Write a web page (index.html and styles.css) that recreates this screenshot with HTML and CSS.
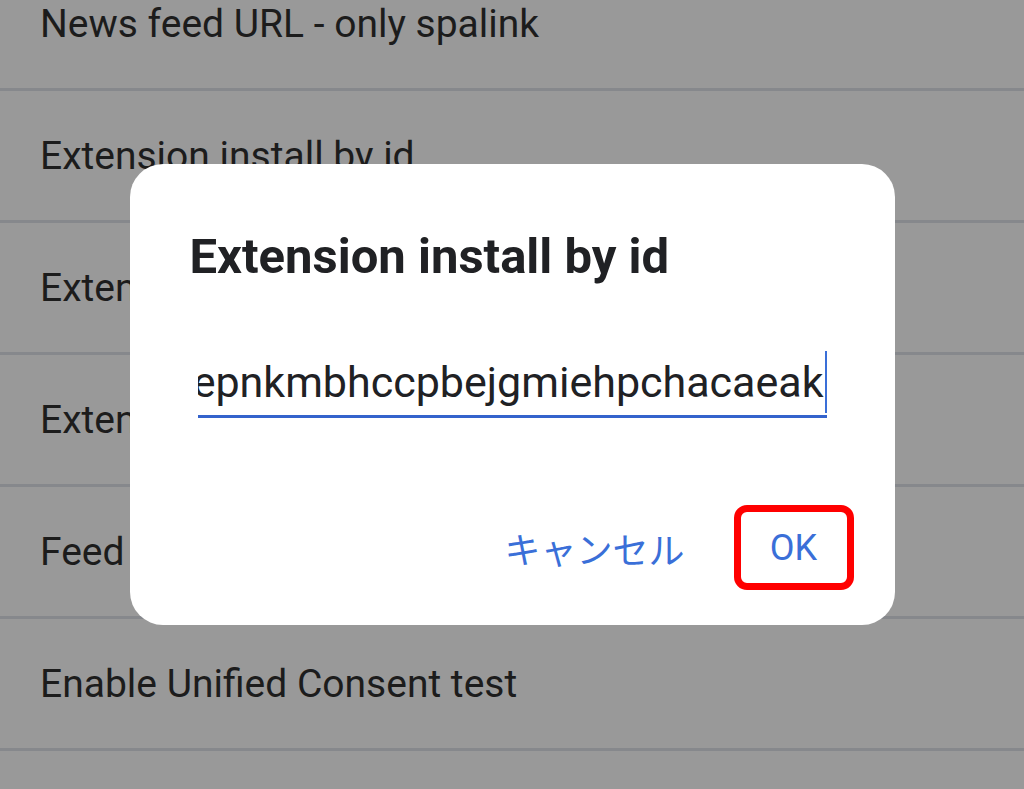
FILE: index.html
```html
<!DOCTYPE html>
<html lang="ja">
<head>
<meta charset="utf-8">
<title>Flags</title>
<link rel="stylesheet" href="styles.css">
</head>
<body>
<ul class="list">
  <li class="row">News feed URL - only spalink</li>
  <li class="row">Extension install by id</li>
  <li class="row">Extension install by URL</li>
  <li class="row">Extension install from file</li>
  <li class="row">Feed notifications test</li>
  <li class="row">Enable Unified Consent test</li>
  <li class="row">Reset all settings</li>
</ul>
<div class="scrim">
  <div class="dialog" role="dialog">
    <h1 class="title">Extension install by id</h1>
    <div class="field">
      <div class="field-text"><span>lmjegmlicamnimmfhcmpkclmigmmcbepnkmbhccpbejgmiehpchacaeak</span><span class="cursor"></span></div>
    </div>
    <div class="actions">
      <button class="btn">キャンセル</button>
      <button class="btn btn-ok">OK</button>
    </div>
  </div>
</div>
</body>
</html>
```
FILE: styles.css
```css
html, body {
  margin: 0;
  padding: 0;
  height: 100%;
  overflow: hidden;
}
body {
  background: #999999;
  font-family: Roboto, "Noto Sans CJK JP", sans-serif;
}
.list {
  list-style: none;
  margin: -41px 0 0 0;
  padding: 0;
}
.row {
  height: 129px;
  border-bottom: 3px solid #86888c;
  display: flex;
  align-items: center;
  padding-left: 40px;
  font-size: 39px;
  color: #1c1c1c;
  white-space: nowrap;
}
.scrim {
  position: fixed;
  inset: 0;
  display: flex;
  align-items: center;
  justify-content: center;
}
.dialog {
  width: 765px;
  height: 461px;
  box-sizing: border-box;
  background: #ffffff;
  border-radius: 33px;
  padding: 64px 41px 0 60px;
  display: flex;
  flex-direction: column;
}
.title {
  margin: 0;
  font-size: 49px;
  font-weight: 700;
  line-height: 58px;
  color: #202124;
}
.field {
  margin: 62px 27px 0 8px;
  border-bottom: 3px solid #3463cc;
  height: 67px;
  overflow: hidden;
}
.field-text {
  display: flex;
  justify-content: flex-end;
  align-items: center;
  height: 67px;
  white-space: nowrap;
  font-size: 43px;
  color: #202124;
  overflow: hidden;
}
.cursor {
  flex: none;
  width: 2px;
  height: 62px;
  margin-left: 1px;
  background: #3a6fd8;
}
.actions {
  margin-top: 87px;
  display: flex;
  justify-content: flex-end;
  align-items: center;
  gap: 49px;
}
.btn {
  font-family: Roboto, "Noto Sans CJK JP", sans-serif;
  font-size: 36px;
  color: #3a6fd8;
  background: none;
  border: 0;
  padding: 0;
}
.btn-ok {
  width: 120px;
  height: 85px;
  box-sizing: border-box;
  border: 7px solid #ff0000;
  border-radius: 13px;
}
```
